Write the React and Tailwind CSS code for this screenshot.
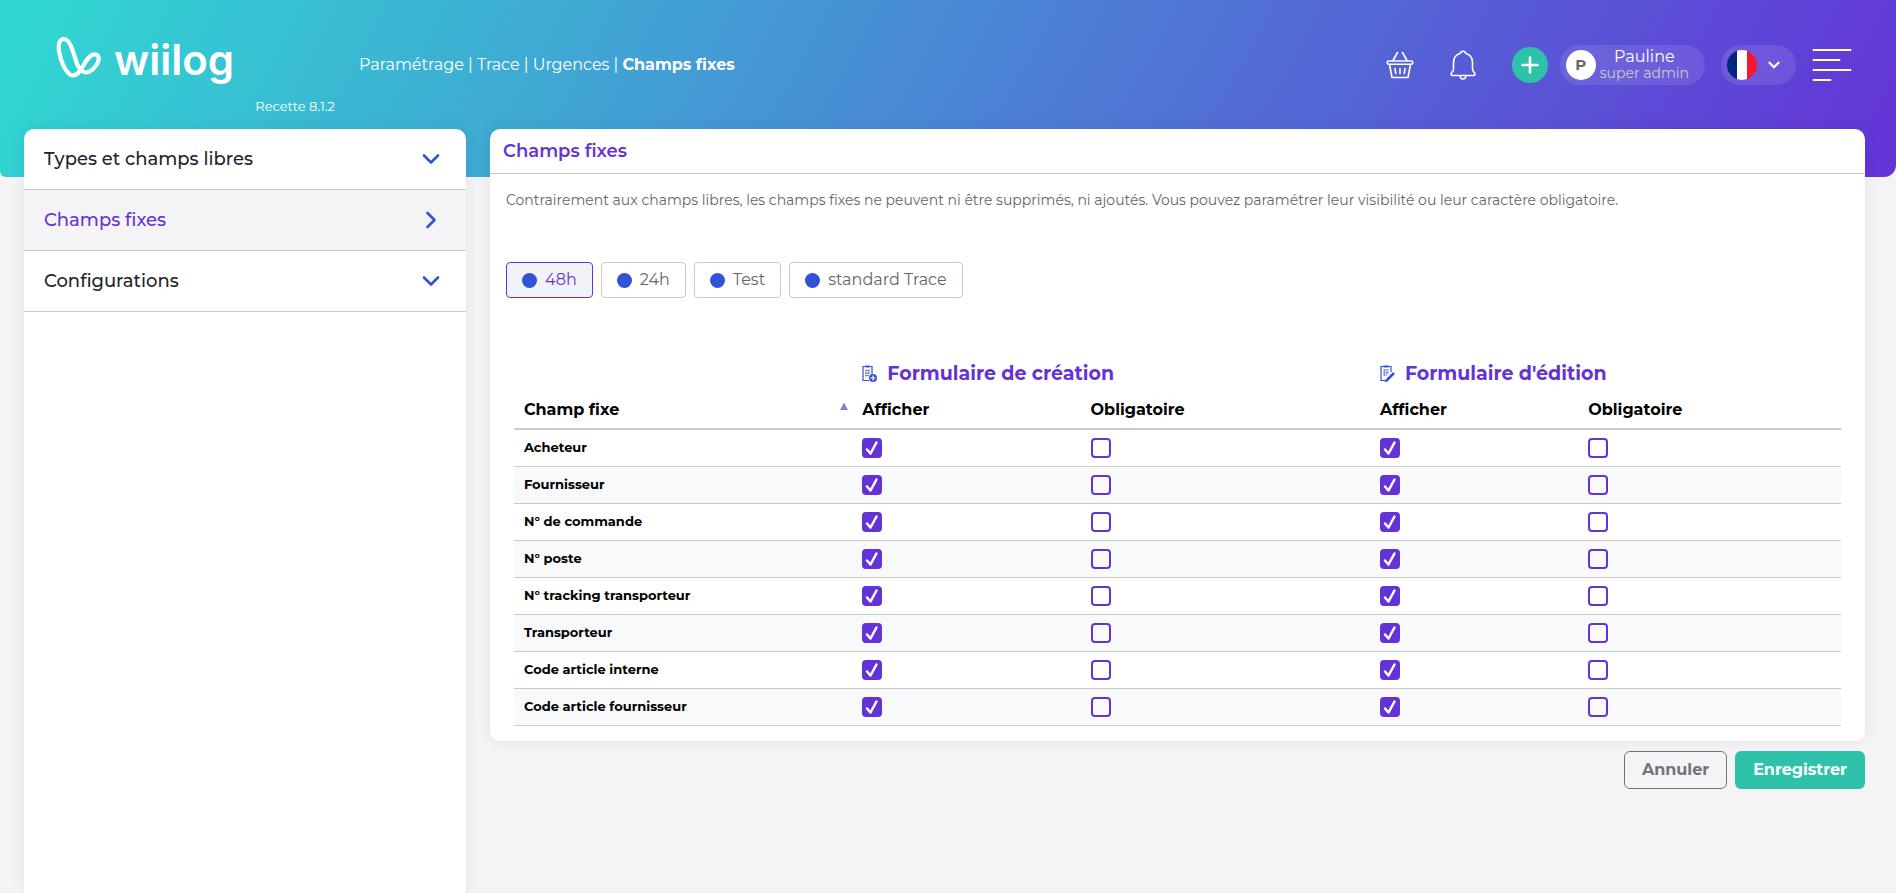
import { useState } from "react";
import { ChevronDown, ChevronRight } from "lucide-react";

const MENU = [
  { label: "Types et champs libres", open: false },
  { label: "Champs fixes", open: true },
  { label: "Configurations", open: false },
];

const TYPES = ["48h", "24h", "Test", "standard Trace"];

const FIELDS = [
  "Acheteur",
  "Fournisseur",
  "N° de commande",
  "N° poste",
  "N° tracking transporteur",
  "Transporteur",
  "Code article interne",
  "Code article fournisseur",
];

const COLUMNS = [
  { key: "createShow", label: "Afficher (création)", checked: true },
  { key: "createRequired", label: "Obligatoire (création)", checked: false },
  { key: "editShow", label: "Afficher (édition)", checked: true },
  { key: "editRequired", label: "Obligatoire (édition)", checked: false },
];

function Logo() {
  return (
    <a href="#accueil" aria-label="wiilog" className="flex items-start gap-3 text-white">
      <svg viewBox="0 0 46 42" className="mt-0.5 h-[42px] w-[46px]" fill="none" stroke="currentColor" strokeWidth="4.2" strokeLinejoin="round">
        <path d="M8 3C3.5 3 2 8 3 15C4.5 25 9 35 14 38.5C17.5 40.5 21 39 24 35C28 29 32 19 38 18.3C42.5 18 43.500 22 42 26C39.500 32 34 37 29 36.3C21.500 35 20 24 16.500 14C14.500 8 12 3 8 3Z" />
      </svg>
      <span className="font-['Inter',sans-serif] text-[42px] leading-[52px] font-semibold">wiilog</span>
    </a>
  );
}

function BasketIcon() {
  return (
    <svg viewBox="0 0 28 28" className="h-7 w-7" fill="none" stroke="currentColor" strokeWidth="1.6" strokeLinecap="round" strokeLinejoin="round">
      <path d="M11.500 1.500L7 9.500M16.500 1.500L21 9.500" />
      <rect x="1.200" y="10" width="25.600" height="3.200" rx="1.400" />
      <path d="M3.500 13.500L6 26.500H22L24.500 13.500" />
      <path d="M9 17.500L9.800 22.500M14 17.500V22.500M19 17.500L18.200 22.500" />
    </svg>
  );
}

function BellIcon() {
  return (
    <svg viewBox="0 0 26 30" className="h-[30px] w-[26px]" fill="none" stroke="currentColor" strokeWidth="1.600" strokeLinecap="round" strokeLinejoin="round">
      <path d="M10.500 3.200C10.500 0.500 15.500 0.500 15.500 3.200C20 4.500 22.500 8 22.500 12.500V19C22.500 21.500 25 22.500 25 24.500C25 25.500 24.300 25.500 23.500 25.500H2.500C1.700 25.500 1 25.500 1 24.500C1 22.500 3.500 21.500 3.500 19V12.500C3.500 8 6 4.500 10.500 3.200Z" />
      <path d="M10.200 26C10.200 30 15.800 30 15.800 26" />
    </svg>
  );
}

function CreateIcon() {
  return (
    <svg viewBox="0 0 16 18" className="h-[18px] w-4" fill="none" stroke="#3353d7">
      <path d="M10 9V1.500H1V15.500H7" strokeWidth="1.200" />
      <path d="M3.500 1.500H7.500" strokeWidth="2" />
      <path d="M3 5.500H8M3 8H8M3 10.500H7" strokeWidth="1.400" opacity="0.7" />
      <circle cx="11" cy="13" r="4" fill="#3353d7" stroke="none" />
      <path d="M11 10.500V15.500M8.500 13H13.500" stroke="white" strokeWidth="1.200" />
    </svg>
  );
}

function EditIcon() {
  return (
    <svg viewBox="0 0 16 18" className="h-[18px] w-4" fill="none" stroke="#3353d7">
      <path d="M11 7V1.500H1V15.500H5" strokeWidth="1.200" />
      <path d="M3.500 1.500H8.500" strokeWidth="2" />
      <path d="M3 5H9M3 7.500H9M3 10H7M4.500 4V11M7 4V10" strokeWidth="1.200" opacity="0.6" />
      <path d="M6.500 15.500L14 8" strokeWidth="2.600" />
      <path d="M4.500 17.500L6 14L8 16Z" fill="#3353d7" stroke="none" />
    </svg>
  );
}

function Tick({ label, initial }) {
  const [on, setOn] = useState(initial);
  return (
    <label className="relative block h-5 w-5">
      <input
        type="checkbox"
        aria-label={label}
        checked={on}
        onChange={() => setOn(!on)}
        className="block h-5 w-5 appearance-none rounded border-2 border-[#6433d7] checked:bg-[#6433d7]"
      />
      {on && (
        <svg viewBox="0 0 20 20" className="pointer-events-none absolute inset-0 h-5 w-5" fill="none" stroke="white" strokeWidth="2.500" strokeLinecap="round" strokeLinejoin="round">
          <path d="M5 11.500L8.500 15.500L14.500 4.500" />
        </svg>
      )}
    </label>
  );
}

function Header() {
  return (
    <header className="flex h-[177px] items-start rounded-br-xl rounded-bl-md bg-[linear-gradient(118deg,#30d9d2,#6433d7)] pr-11 pl-14 text-white">
      <div className="w-[303px] shrink-0 pt-[34px]">
        <Logo />
        <p className="pt-[10px] pr-6 text-right text-[13px] leading-5">Recette 8.1.2</p>
      </div>
      <nav aria-label="Fil d'Ariane" className="flex-1 pt-[53px] text-base leading-6">
        Paramétrage | Trace | Urgences | <strong className="font-bold">Champs fixes</strong>
      </nav>
      <div className="box-content flex h-10 shrink-0 items-center pt-[45px]">
        <button aria-label="Panier" className="mr-9"><BasketIcon /></button>
        <button aria-label="Notifications" className="mr-9"><BellIcon /></button>
        <button aria-label="Ajouter" className="mr-3 flex h-9 w-9 items-center justify-center rounded-full bg-[#2fc2ab]">
          <svg viewBox="0 0 18 18" className="h-[18px] w-[18px]" stroke="white" strokeWidth="2.600" strokeLinecap="round">
            <path d="M9 1.500V16.500M1.500 9H16.500" />
          </svg>
        </button>
        <button className="mr-4 flex h-10 items-center gap-1 rounded-full bg-white/10 pr-4 pl-[6px]">
          <span className="flex h-[30px] w-[30px] items-center justify-center rounded-full bg-white text-[15px] font-bold text-[#666]">P</span>
          <span className="flex flex-col items-center">
            <span className="text-base leading-4">Pauline</span>
            <span className="text-sm leading-4 text-[#cbcbcb]">super admin</span>
          </span>
        </button>
        <button aria-label="Langue : français" className="mr-4 flex h-10 items-center gap-2 rounded-full bg-white/10 pr-[13px] pl-[6px]">
          <svg viewBox="0 0 30 30" className="h-[30px] w-[30px]">
            <clipPath id="flag"><circle cx="15" cy="15" r="15" /></clipPath>
            <g clipPath="url(#flag)">
              <rect width="10" height="30" fill="#00267f" />
              <rect x="10" width="10" height="30" fill="white" />
              <rect x="20" width="10" height="30" fill="#f31830" />
            </g>
          </svg>
          <ChevronDown className="h-[18px] w-[18px]" strokeWidth={3} />
        </button>
        <button aria-label="Menu">
          <svg viewBox="0 0 40 34" className="h-[34px] w-10" stroke="white" strokeWidth="2" strokeLinecap="round">
            <path d="M1.500 2H38.500M1.500 12H27.500M1.500 22H38.500M1.500 32H18.500" />
          </svg>
        </button>
      </div>
    </header>
  );
}

function Sidebar() {
  return (
    <nav aria-label="Paramètres" className="rounded-t-[10px] bg-white shadow-[0_0_15px_rgba(0,0,0,0.07)]">
      {MENU.map(({ label, open }) => (
        <a
          key={label}
          href="#section"
          aria-current={open ? "page" : undefined}
          className={
            open
              ? "flex h-[61px] items-center justify-between border-b border-[#cbcbcb] bg-[#f4f4f7] pr-[21px] pl-5 text-lg font-medium text-[#6433d7]"
              : "flex h-[61px] items-center justify-between border-b border-[#cbcbcb] pr-[21px] pl-5 text-lg font-medium text-[#212529]"
          }
        >
          {label}
          {open ? (
            <ChevronRight className="h-7 w-7 text-[#3353d7]" strokeWidth={2.25} />
          ) : (
            <ChevronDown className="h-7 w-7 text-[#3353d7]" strokeWidth={2.25} />
          )}
        </a>
      ))}
    </nav>
  );
}

function FieldTable() {
  return (
    <table className="w-full table-fixed border-collapse text-left text-black">
      <colgroup>
        <col className="w-[25.5%]" />
        <col className="w-[17.2%]" />
        <col className="w-[21.8%]" />
        <col className="w-[15.7%]" />
        <col />
      </colgroup>
      <thead>
        <tr className="h-9 text-[19px] text-[#6433d7]">
          <td />
          <th colSpan={2} scope="colgroup" className="px-[10px] font-bold">
            <span className="flex items-center gap-[9px]"><CreateIcon />Formulaire de création</span>
          </th>
          <th colSpan={2} scope="colgroup" className="px-[10px] font-bold">
            <span className="flex items-center gap-[9px]"><EditIcon />Formulaire d'édition</span>
          </th>
        </tr>
        <tr className="h-[37px] border-b-2 border-[#cbcbcb] text-base">
          <th scope="col" className="pr-1 pl-[10px] font-bold">
            <span className="flex items-start justify-between">
              Champ fixe
              <svg viewBox="0 0 8 8" className="mt-1 h-2 w-2" fill="#7f7fe0"><path d="M4 0.500L8 8H0Z" /></svg>
            </span>
          </th>
          <th scope="col" className="px-[10px] font-bold">Afficher</th>
          <th scope="col" className="px-[10px] font-bold">Obligatoire</th>
          <th scope="col" className="px-[10px] font-bold">Afficher</th>
          <th scope="col" className="px-[10px] font-bold">Obligatoire</th>
        </tr>
      </thead>
      <tbody>
        {FIELDS.map((field) => (
          <tr key={field} className="h-[37px] border-b border-[#cbcbcb] even:bg-[#f8f9fb]">
            <th scope="row" className="px-[10px] text-[13px] font-bold">{field}</th>
            {COLUMNS.map((column) => (
              <td key={column.key} className="px-[10px]">
                <Tick label={`${field} : ${column.label}`} initial={column.checked} />
              </td>
            ))}
          </tr>
        ))}
      </tbody>
    </table>
  );
}

export default function App() {
  const [type, setType] = useState(TYPES[0]);
  return (
    <div className="flex min-h-screen flex-col bg-[#f4f4f7] font-['Montserrat','Inter',sans-serif]">
      <Header />
      <main className="-mt-12 grid flex-1 grid-cols-[9fr_28fr] gap-6 pr-[31px] pl-6">
        <Sidebar />
        <div>
          <section className="rounded-[10px] bg-white pb-[15px] shadow-[0_0_15px_rgba(0,0,0,0.07)]">
            <h1 className="h-[45px] border-b border-[#cbcbcb] px-[13px] text-lg leading-[44px] font-semibold text-[#6433d7]">Champs fixes</h1>
            <div className="px-4 pt-4">
              <p className="text-sm leading-5 text-[#666]">
                Contrairement aux champs libres, les champs fixes ne peuvent ni être supprimés, ni ajoutés. Vous pouvez paramétrer leur visibilité ou leur caractère obligatoire.
              </p>
              <div className="mt-[52px] flex flex-wrap gap-2">
                {TYPES.map((name) => (
                  <button
                    key={name}
                    aria-pressed={name === type}
                    onClick={() => setType(name)}
                    className={
                      name === type
                        ? "flex h-9 items-center gap-2 rounded border border-[#6433d7] bg-[#f1f3f8] px-[15px] text-base text-[#6433d7]"
                        : "flex h-9 items-center gap-2 rounded border border-[#cbcbcb] bg-white px-[15px] text-base text-[#666]"
                    }
                  >
                    <span className="h-[15px] w-[15px] rounded-full bg-[#3353d7]" />
                    {name}
                  </button>
                ))}
              </div>
            </div>
            <div className="px-6 pt-[58px]">
              <FieldTable />
            </div>
          </section>
          <div className="flex justify-end gap-2 pt-[10px]">
            <button className="h-[38px] rounded-md border border-[#6c757d] px-[17px] text-base font-bold text-[#6c757d]">Annuler</button>
            <button className="h-[38px] rounded-md bg-[#2fc2ab] px-[18px] text-base font-bold text-white">Enregistrer</button>
          </div>
        </div>
      </main>
    </div>
  );
}
